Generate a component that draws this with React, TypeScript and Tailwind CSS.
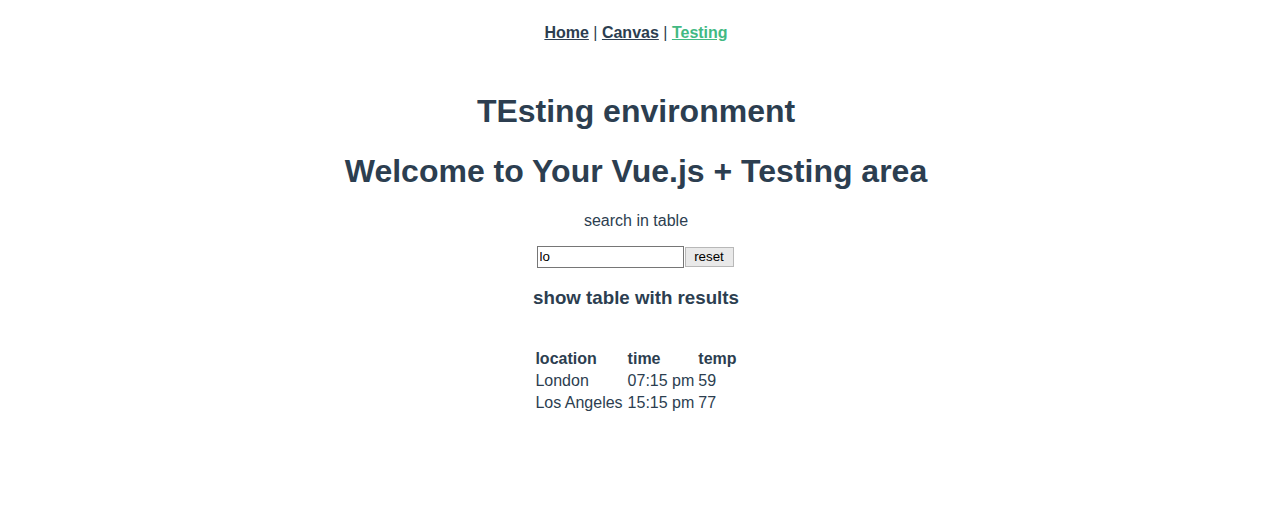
import React from "react";

export default function App() {
  const rows = [
    { location: "London", time: "07:15 pm", temp: "59" },
    { location: "Los Angeles", time: "15:15 pm", temp: "77" },
  ];
  return (
    <div
      className="text-center text-[#2c3e50] antialiased"
      style={{ fontFamily: '"Liberation Sans", Arial, Helvetica, sans-serif' }}
    >
      <div className="pt-[24px] pb-[29px] text-[16px] leading-[18.4px]">
        <a href="#" className="font-bold text-[#2c3e50] underline">Home</a> |{" "}
        <a href="#" className="font-bold text-[#2c3e50] underline">Canvas</a> |{" "}
        <a href="#" className="font-bold text-[#42b983] underline">Testing</a>
      </div>
      <h1 className="text-[32px] leading-[36.8px] font-bold mt-[21.44px] mb-[23.5px]">TEsting environment</h1>
      <div>
        <h1 className="text-[32px] leading-[36.8px] font-bold my-[21.44px]">
          Welcome to Your Vue.js + Testing area
        </h1>
        <p className="text-[16px] leading-[18.4px] mt-[22.5px] mb-[15px]">search in table</p>
        <div className="flex justify-center items-center h-[22px] pr-[2px]">
          <input
            defaultValue="lo"
            className="w-[147px] h-[22px] border border-[#767676] px-[2px] text-[13.33px] text-black bg-white outline-none"
            style={{ fontFamily: "Arial, sans-serif" }}
          />
          <button
            className="ml-[1px] w-[49px] h-[20px] border border-[#b8b8b8] bg-[#e9e9e9] text-[13.33px] text-black leading-none"
            style={{ fontFamily: "Arial, sans-serif" }}
          >
            reset
          </button>
        </div>
        <h3 className="text-[18.72px] leading-[21.5px] font-bold my-[18.72px]">show table with results</h3>
        <table className="mx-auto mt-[39px] border-separate border-spacing-[2px] text-[16px] leading-[18px] text-left">
          <thead>
            <tr>
              <th className="p-[1px] pr-[2px] font-bold text-left">location</th>
              <th className="p-[1px] font-bold text-left">time</th>
              <th className="p-[1px] font-bold text-left">temp</th>
            </tr>
          </thead>
          <tbody>
            {rows.map((r) => (
              <tr key={r.location}>
                <td className="p-[1px] pr-[2px]">{r.location}</td>
                <td className="p-[1px]">{r.time}</td>
                <td className="p-[1px]">{r.temp}</td>
              </tr>
            ))}
          </tbody>
        </table>
      </div>
    </div>
  );
}
